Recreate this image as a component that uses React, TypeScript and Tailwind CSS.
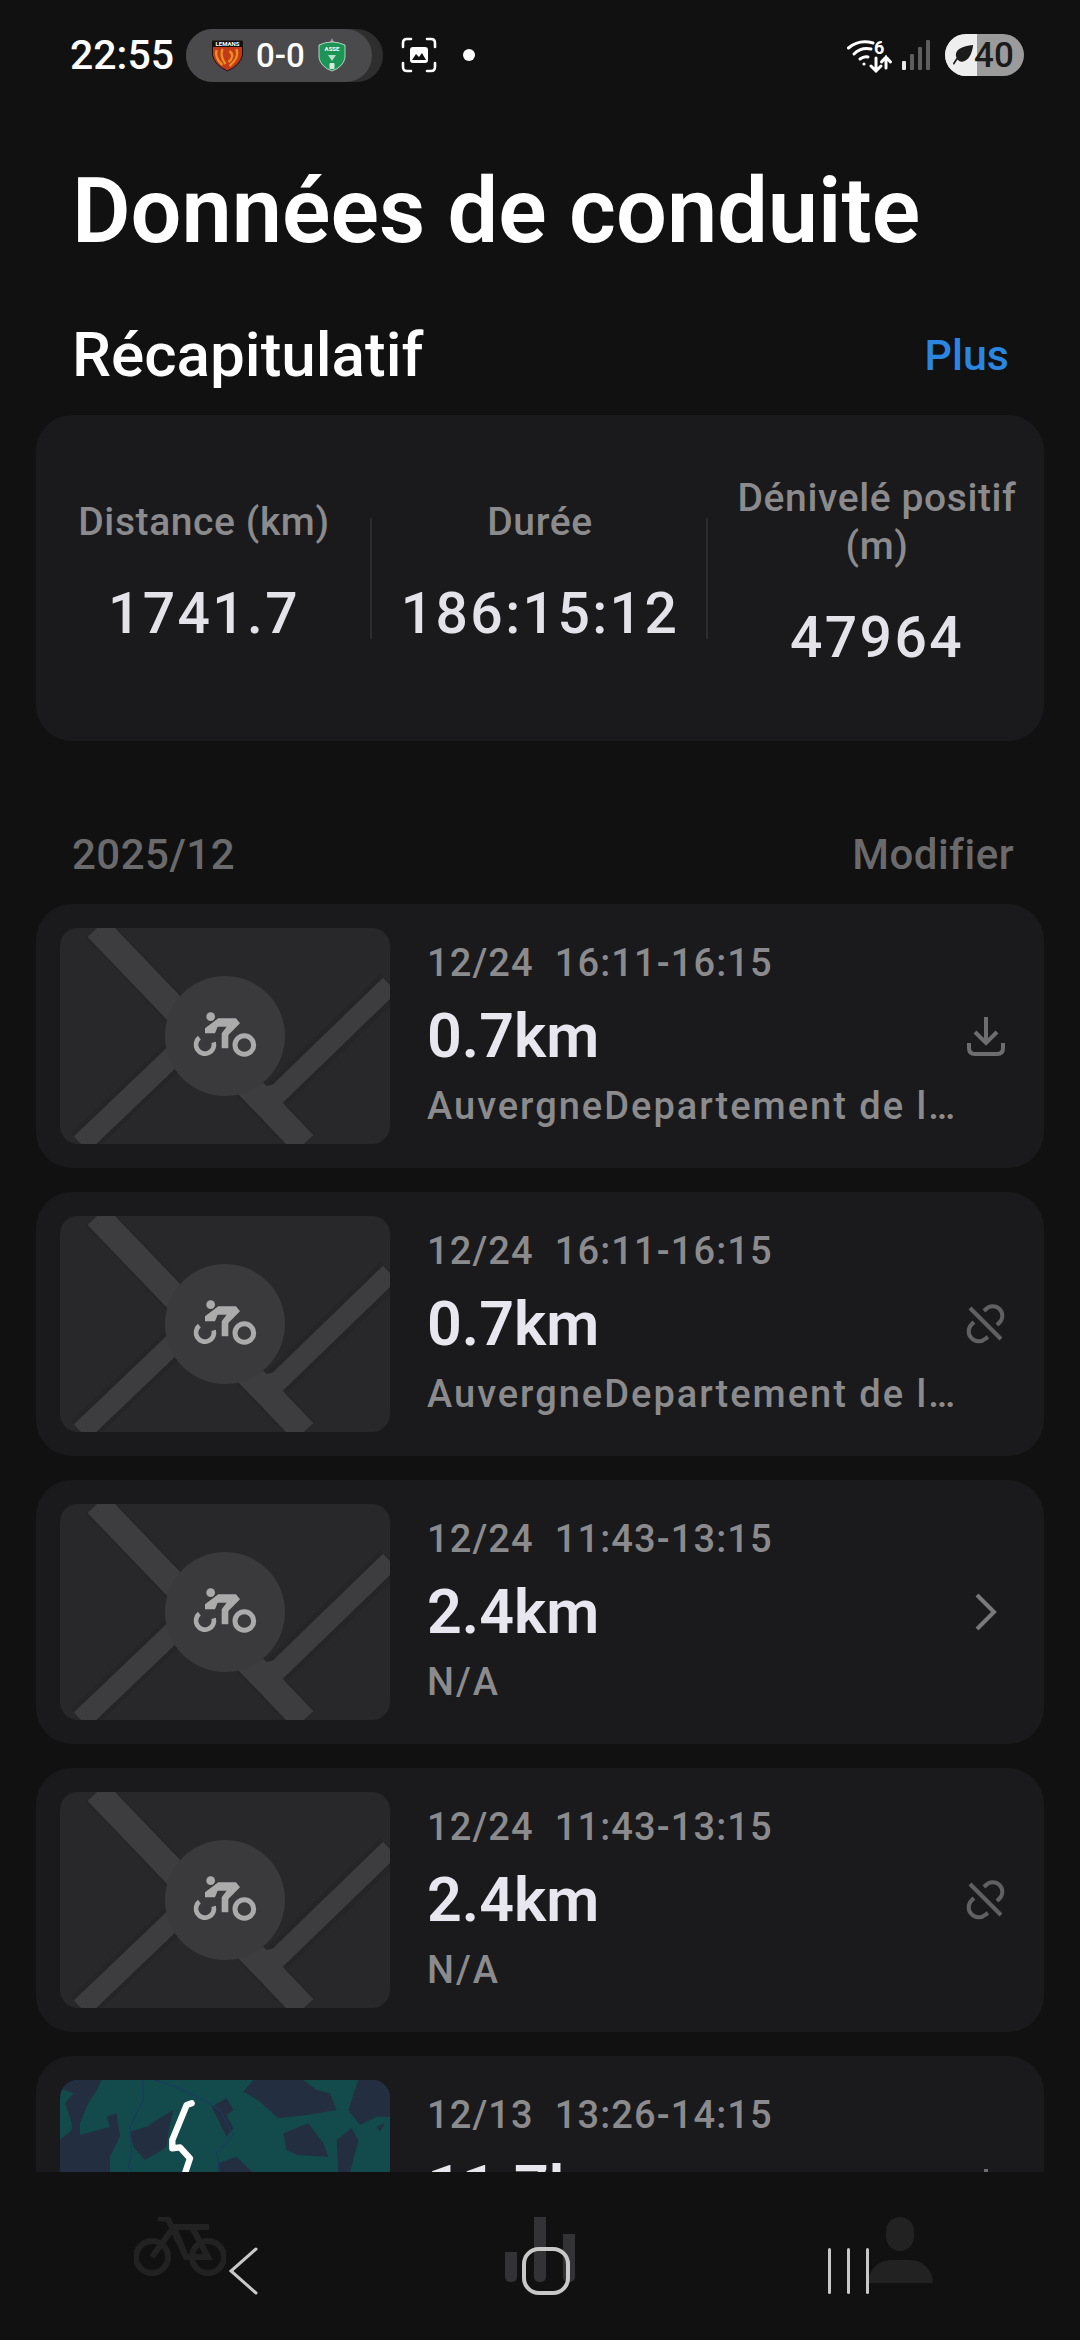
import React from 'react';

const font = { fontFamily: 'Roboto, sans-serif' };

function MapPlaceholder() {
  return (
    <svg viewBox="0 0 330 216" className="block h-full w-full">
      <rect width="330" height="216" fill="#28282a" />
      <g fill="none" stroke="#252527" strokeWidth="29">
        <path d="M37 0 L244 216" />
        <path d="M21 216 L130 112" />
        <path d="M330 57 L205 178" />
      </g>
      <g fill="none" stroke="#3d3d3f">
        <path d="M37 0 L244 216" strokeWidth="26" />
        <path d="M21 216 L130 112" strokeWidth="21" />
        <path d="M330 57 L205 178" strokeWidth="20" />
      </g>
      <path d="M205 158 L222 155 L214 165 Z M222 172 L226 182 L214 172 Z" fill="#3d3d3f" />
      <circle cx="165" cy="108" r="60" fill="#3a3a3c" />
      <g transform="translate(120 72) scale(0.3333)" fill="#ababab">
        <circle cx="92" cy="50" r="13" />
        <path d="M75 85 L115 55 H168 L180 70 L145 105 V145 H125 V100 L140 80 H113 L105 100 H75 Z" />
        <path d="M58 113 A27 27 0 1 0 101 127" fill="none" stroke="#ababab" strokeWidth="14" />
        <circle cx="193" cy="135" r="28" fill="none" stroke="#ababab" strokeWidth="15" />
      </g>
    </svg>
  );
}

function MapTerrain() {
  return (
    <svg viewBox="0 0 330 216" className="block h-full w-full">
      <rect width="330" height="216" fill="#134a4c" />
      <g transform="scale(0.3333) translate(-90 -60)">
        <g fill="#232f40">
          <path d="M100 60 L215 60 L200 90 L175 130 L150 190 L150 225 L240 200 L230 170 L260 160 L270 230 L240 290 L240 340 L90 340 L90 240 L125 210 L125 190 L105 130 L130 100 L90 85 Z" />
          <path d="M300 215 L350 200 L390 175 L430 150 L415 220 L410 260 L380 280 L345 300 L310 260 Z" />
          <path d="M640 95 L670 60 L820 60 L860 90 L900 100 L920 150 L830 165 L745 175 L690 125 Z" />
          <path d="M985 60 L1080 60 L1080 170 L1040 170 L990 195 L955 150 Z" />
          <path d="M760 220 L835 190 L880 250 L895 290 L800 285 L770 270 Z" />
          <path d="M920 240 L965 205 L985 240 L960 340 L925 340 Z" />
          <path d="M565 310 L620 290 L670 340 L565 340 Z" />
          <path d="M545 140 L590 115 L610 150 L590 165 L610 205 L590 230 L560 170 Z" />
          <path d="M1040 200 L1065 190 L1050 215 Z" />
        </g>
        <g fill="none" stroke="#1a3a66" strokeWidth="3">
          <path d="M338 60 L340 120 L300 200 L305 270 L295 320 L310 340" />
          <path d="M375 60 L430 78 L510 115 L570 150 L610 225 L560 280 L570 340" />
        </g>
        <path d="M485 130 L470 135 L427 240 L427 265 L450 262 L480 295 L465 340 L450 400" fill="none" stroke="#ffffff" strokeWidth="19" strokeLinecap="round" strokeLinejoin="round" />
      </g>
    </svg>
  );
}

function DownloadIcon() {
  return (
    <svg viewBox="0 0 40 40" className="h-10 w-10" fill="none" stroke="#6d6d6f" strokeWidth="4">
      <path d="M20 1 V27" />
      <path d="M9 16 L20 27 L31 16" />
      <path d="M3 27 V32 Q3 38 9 38 H31 Q37 38 37 32 V27" />
    </svg>
  );
}

function UnlinkIcon() {
  return (
    <svg viewBox="0 0 40 40" className="h-10 w-10" fill="none" stroke="#606062" strokeWidth="4">
      <path d="M4 4 L35 35" />
      <path d="M18 7 L20 5 a9.5 9.5 0 0 1 13.5 0 a9.5 9.5 0 0 1 0 13.5 L31 21" />
      <path d="M22 33 L19 35 a9.5 9.5 0 0 1 -13.5 -1 a9.5 9.5 0 0 1 0 -13.5 L8 18" />
    </svg>
  );
}

function ChevronIcon() {
  return (
    <svg viewBox="0 0 40 40" className="h-10 w-10" fill="none" stroke="#79797b" strokeWidth="4">
      <path d="M11 3 L28 20 L11 37" />
    </svg>
  );
}

const rows = [
  { date: '12/24', time: '16:11-16:15', dist: '0.7km', place: 'AuvergneDepartement de l…', icon: <DownloadIcon />, map: <MapPlaceholder /> },
  { date: '12/24', time: '16:11-16:15', dist: '0.7km', place: 'AuvergneDepartement de l…', icon: <UnlinkIcon />, map: <MapPlaceholder /> },
  { date: '12/24', time: '11:43-13:15', dist: '2.4km', place: 'N/A', icon: <ChevronIcon />, map: <MapPlaceholder /> },
  { date: '12/24', time: '11:43-13:15', dist: '2.4km', place: 'N/A', icon: <UnlinkIcon />, map: <MapPlaceholder /> },
  { date: '12/13', time: '13:26-14:15', dist: '11.7km', place: 'N/A', icon: <DownloadIcon />, map: <MapTerrain /> },
];

function RideRow({ row }: { row: (typeof rows)[number] }) {
  return (
    <div className="flex h-[264px] shrink-0 items-center rounded-[36px] bg-[#1a1a1c] pl-6 pr-[38px]">
      <div className="h-[216px] w-[330px] shrink-0 overflow-hidden rounded-[18px]">{row.map}</div>
      <div className="ml-[37px] flex w-[530px] flex-col">
        <div className="-mt-[3px] h-[48px] whitespace-pre text-[38px] font-medium leading-[48px] tracking-[1.1px] text-[#8b8b8d]">
          {row.date}  {row.time}
        </div>
        <div className="mt-[17px] h-[64px] text-[61px] font-semibold leading-[64px] text-[#e8e6ee]">{row.dist}</div>
        <div className="mt-[14px] h-[48px] whitespace-nowrap text-[38px] font-medium leading-[48px] tracking-[2px] text-[#8b8b8d]">{row.place}</div>
      </div>
      <div className="ml-auto">{row.icon}</div>
    </div>
  );
}

function Stat({ label, value }: { label: React.ReactNode; value: string }) {
  return (
    <div className="flex flex-col items-center pb-[12px] pl-[2px] text-center">
      <div className="whitespace-nowrap text-[39px] font-medium leading-[48px] tracking-[0.6px] text-[#8b8b8d]">{label}</div>
      <div className="mt-[36px] text-[57px] font-medium leading-[64px] tracking-[2.4px] text-[#e5e3ea]">{value}</div>
    </div>
  );
}

function StatusBar() {
  return (
    <div className="flex h-[110px] shrink-0 items-center pl-[70px] pr-[56px] text-white">
      <span className="w-[116px] text-[41px] font-medium leading-none">22:55</span>
      <div className="flex h-[53px] w-[197px] rounded-full bg-[#2e2e2e]">
        <div className="flex h-[53px] w-[186px] items-center rounded-full bg-[#4a4a4c] pl-[25px]">
          <svg viewBox="0 0 32 34" className="h-[34px] w-[33px]">
            <path d="M1 3 H31 V17 Q29 27 16 33 Q3 27 1 17 Z" fill="#c23a1c" stroke="#1a1210" strokeWidth="1" />
            <path d="M1 3 H31 V9 H1 Z" fill="#141010" />
            <path d="M5 12 Q3 20 11 27 M11 11 Q8 18 14 26 M25 11 Q28 20 18 28 M18 13 Q24 18 17 24" fill="none" stroke="#eb8f1e" strokeWidth="2.4" />
            <text x="16" y="8" textAnchor="middle" fontSize="6" fontWeight="700" fill="#ffffff">LEMANS</text>
          </svg>
          <span className="ml-[12px] text-[33px] font-medium leading-none">0-0</span>
          <svg viewBox="0 0 28 34" className="ml-[13px] h-[34px] w-[28px]">
            <path d="M14 0 L16 4 L12 4 Z" fill="#a78aa8" />
            <path d="M1 7 Q14 1 27 7 V20 Q25 29 14 33 Q3 29 1 20 Z" fill="#1c9455" stroke="#d5eadc" strokeWidth="0.8" />
            <text x="14" y="13" textAnchor="middle" fontSize="6" fontWeight="700" fill="#ffffff">ASSE</text>
            <path d="M10 17 L18 17 L14 23 Z" fill="#ffffff" opacity="0.7" />
            <rect x="11.5" y="25" width="5" height="6" rx="1" fill="#d5eadc" />
          </svg>
        </div>
      </div>
      <svg viewBox="0 0 36 36" className="ml-[18px] h-[36px] w-[36px]" fill="none" stroke="#ffffff" strokeWidth="2.6" strokeLinecap="round">
        <path d="M2 10 V6 Q2 2 6 2 H10 M26 2 H30 Q34 2 34 6 V10 M34 26 V30 Q34 34 30 34 H26 M10 34 H6 Q2 34 2 30 V26" />
        <rect x="9" y="10" width="18" height="16" rx="3" fill="#ffffff" stroke="none" />
        <path d="M11 23 L15 17 L18 20 L21 16 L25 23 Z" fill="#111111" stroke="none" />
      </svg>
      <div className="ml-[26px] h-3 w-3 rounded-full bg-white" />
      <div className="ml-auto flex items-center">
        <svg viewBox="0 0 46 36" className="h-[36px] w-[46px]" fill="none" stroke="#ffffff" strokeLinecap="round">
          <path d="M1.5 11 Q12 2 26 6" strokeWidth="3" />
          <path d="M7 17 Q14 10 24 12" strokeWidth="3" />
          <path d="M13 22 Q17 19 21 20" strokeWidth="3" />
          <circle cx="17" cy="27" r="1.6" fill="#ffffff" stroke="none" />
          <text x="27" y="17" fontSize="18" fontWeight="700" fill="#ffffff" stroke="none" fontFamily="Roboto, sans-serif">6</text>
          <path d="M29 21 V34 M24 29 L29 34 L34 29" strokeWidth="3" />
          <path d="M39 31 V20 M34.5 25 L39 20 L43.5 25" strokeWidth="3" />
        </svg>
        <svg viewBox="0 0 28 32" className="ml-[9px] h-[32px] w-[28px]">
          <rect x="0" y="22" width="4" height="9" rx="1" fill="#e8e8e8" />
          <rect x="8" y="15" width="4" height="16" rx="1" fill="#5e5e5e" />
          <rect x="16" y="8" width="4" height="23" rx="1" fill="#5e5e5e" />
          <rect x="24" y="1" width="4" height="30" rx="1" fill="#5e5e5e" />
        </svg>
        <div className="relative ml-[15px] flex h-[42px] w-[79px] items-center overflow-hidden rounded-full bg-[#9b9b9b]">
          <div className="h-full w-[32px] bg-[#eeeeee]" />
          <svg viewBox="0 0 24 24" className="absolute left-[7px] top-[10px] h-[22px] w-[22px]">
            <path d="M23 1 C23 1 22 17 12 19 Q8 20 6 17 L2 23 L1 21 L5 15 Q3 11 6 7 C10 2 23 1 23 1 Z" fill="#1b1b1b" />
          </svg>
          <span className="absolute left-[29px] text-[35px] font-medium leading-none text-[#1b1b1b]">40</span>
        </div>
      </div>
    </div>
  );
}

function BottomNav() {
  return (
    <div className="relative h-[168px] shrink-0 bg-[#111111]">
      <div className="grid h-full grid-cols-3 pt-[45px]">
        <div className="flex justify-center">
          <svg viewBox="0 0 92 60" className="h-[60px] w-[92px]" fill="none" stroke="#222222" strokeWidth="6">
            <circle cx="18" cy="40" r="16" />
            <circle cx="74" cy="40" r="16" />
            <path d="M18 40 L40 10 L72 10 M40 10 L52 40 H74 L58 10 M24 1 L34 2 L52 40 M50 10 H75" />
          </svg>
        </div>
        <div className="flex h-[65px] items-end justify-center gap-[17px]">
          <div className="h-[30px] w-[12px] rounded-b-[5px] bg-[#333335]" />
          <div className="h-[65px] w-[12px] rounded-b-[5px] bg-[#333335]" />
          <div className="h-[48px] w-[12px] rounded-b-[5px] bg-[#333335]" />
        </div>
        <div className="flex flex-col items-center">
          <div className="h-[34px] w-[28px] rounded-full bg-[#222222]" />
          <div className="mt-[9px] h-[23px] w-[65px] rounded-t-[26px] bg-[#222222]" />
        </div>
      </div>
      <div className="absolute left-[228px] top-[75px] flex h-[48px] items-center">
        <svg viewBox="0 0 30 48" className="h-[48px] w-[30px]" fill="none" stroke="#c8c8c8" strokeWidth="3" strokeLinecap="round">
          <path d="M28 2 L3 24 L28 46" />
        </svg>
        <div className="ml-[264px] h-[48px] w-[48px] rounded-[17px] border-[4px] border-[#c8c8c8]" />
        <div className="ml-[258px] flex gap-[16px]">
          <div className="h-[46px] w-[3px] rounded-full bg-[#c8c8c8]" />
          <div className="h-[46px] w-[3px] rounded-full bg-[#c8c8c8]" />
          <div className="h-[46px] w-[3px] rounded-full bg-[#c8c8c8]" />
        </div>
      </div>
    </div>
  );
}

export default function App() {
  return (
    <div className="flex h-[2340px] w-[1080px] flex-col overflow-hidden bg-[#111111]" style={font}>
      <StatusBar />
      <div className="flex min-h-0 flex-1 flex-col overflow-hidden">
        <h1 className="flex h-[196px] shrink-0 items-center pl-[72px] pt-[8px] text-[90px] font-semibold leading-none text-white">
          Données de conduite
        </h1>
        <div className="flex h-[98px] shrink-0 items-center justify-between pl-[72px] pr-[71px]">
          <span className="text-[62px] font-medium leading-none text-white">Récapitulatif</span>
          <span className="text-[43px] font-medium leading-none text-[#2a86e0]">Plus</span>
        </div>
        <div className="mx-9 mt-[11px] grid h-[326px] shrink-0 grid-cols-3 items-center rounded-[36px] bg-[#1a1a1c]">
          <div className="flex h-[121px] items-center justify-center border-r-2 border-[#2c2c2e]">
            <Stat label="Distance (km)" value="1741.7" />
          </div>
          <div className="flex h-[121px] items-center justify-center border-r-2 border-[#2c2c2e]">
            <Stat label="Durée" value="186:15:12" />
          </div>
          <div className="flex items-center justify-center">
            <Stat label={<>Dénivelé positif<br />(m)</>} value="47964" />
          </div>
        </div>
        <div className="mt-[74px] flex h-[80px] shrink-0 items-center justify-between pl-[72px] pr-[66px] text-[42px] font-medium leading-none tracking-[0.5px] text-[#6a6a6c]">
          <span>2025/12</span>
          <span>Modifier</span>
        </div>
        <div className="mx-9 mt-[9px] flex flex-col gap-6">
          {rows.map((row, i) => (
            <RideRow key={i} row={row} />
          ))}
        </div>
      </div>
      <BottomNav />
    </div>
  );
}
